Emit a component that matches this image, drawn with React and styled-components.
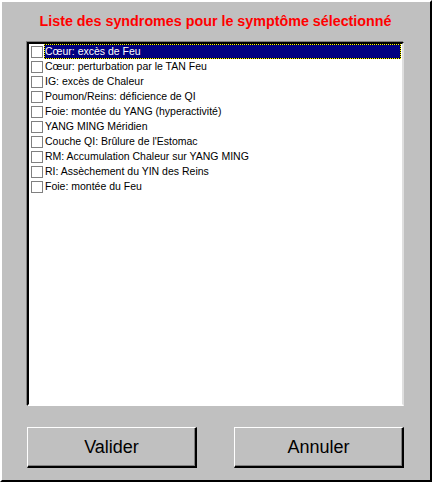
import React, { useState } from "react";
import styled, { createGlobalStyle } from "styled-components";

const GlobalStyle = createGlobalStyle`
  html, body {
    margin: 0;
    padding: 0;
    background: #c0c0c0;
  }
`

const Dialog = styled.div`
  box-sizing: border-box;
  width: 432px;
  height: 482px;
  background: #c0c0c0;
  border-style: solid;
  border-width: 2px;
  border-color: #ffffff #000000 #000000 #ffffff;
  padding: 8px 26px 0 25px;
  display: flex;
  flex-direction: column;
  font-family: "Liberation Sans", Arial, sans-serif;
`

const Title = styled.h1`
  margin: 0 0 10px;
  height: 22px;
  line-height: 22px;
  text-align: center;
  color: #ff0000;
  font-size: 14.3px;
  font-weight: bold;
`

const ListBox = styled.div`
  box-sizing: border-box;
  height: 364px;
  background: #ffffff;
  border-style: solid;
  border-width: 2px;
  border-color: #000000 #dfdfdf #ffffff #000000;
  box-shadow: -1px -1px 0 #808080;
  padding: 0 0 0 2px;
  display: flex;
  flex-direction: column;
`

const Row = styled.div`
  display: flex;
  align-items: center;
  height: 15px;
  cursor: default;
`

const Box = styled.span`
  box-sizing: border-box;
  flex: none;
  width: 12px;
  height: 12px;
  margin-right: 1px;
  border: 1px solid #808080;
  background: #ffffff;
`

const Label = styled.span`
  box-sizing: border-box;
  flex: 1;
  height: 15px;
  line-height: 13px;
  margin-right: 1px;
  font-size: 10.5px;
  white-space: nowrap;
  border: 1px dotted ${p => (p.$selected ? "#ffff00" : "transparent")};
  color: ${p => (p.$selected ? "#ffffff" : "#000000")};
  background: ${p => (p.$selected ? "linear-gradient(#000080, #000080) padding-box, #000000" : "transparent")};
`

const Buttons = styled.div`
  display: flex;
  justify-content: space-between;
  margin-top: 21px;
`

const Button = styled.button`
  box-sizing: border-box;
  width: 170px;
  height: 41px;
  background: #c0c0c0;
  border-style: solid;
  border-width: 1px 2px 2px 1px;
  border-color: #ffffff #000000 #000000 #ffffff;
  box-shadow: inset -1px -1px 0 #808080;
  font-family: "Liberation Sans", Arial, sans-serif;
  font-size: 18px;
  color: #000000;
  padding: 0;
`

const syndromes = [
  "Cœur: excès de Feu",
  "Cœur: perturbation par le TAN Feu",
  "IG: excès de Chaleur",
  "Poumon/Reins: déficience de QI",
  "Foie: montée du YANG (hyperactivité)",
  "YANG MING Méridien",
  "Couche QI: Brûlure de l'Estomac",
  "RM: Accumulation Chaleur sur YANG MING",
  "RI: Assèchement du YIN des Reins",
  "Foie: montée du Feu",
]

export default function App() {
  const [selected, setSelected] = useState(0)

  return <>
    <GlobalStyle />
    <Dialog>
      <Title>Liste des syndromes pour le symptôme sélectionné</Title>
      <ListBox>
        {syndromes.map((s, i) =>
          <Row key={i} onClick={() => setSelected(i)}>
            <Box />
            <Label $selected={i === selected}>{s}</Label>
          </Row>
        )}
      </ListBox>
      <Buttons>
        <Button>Valider</Button>
        <Button>Annuler</Button>
      </Buttons>
    </Dialog>
  </>
}
